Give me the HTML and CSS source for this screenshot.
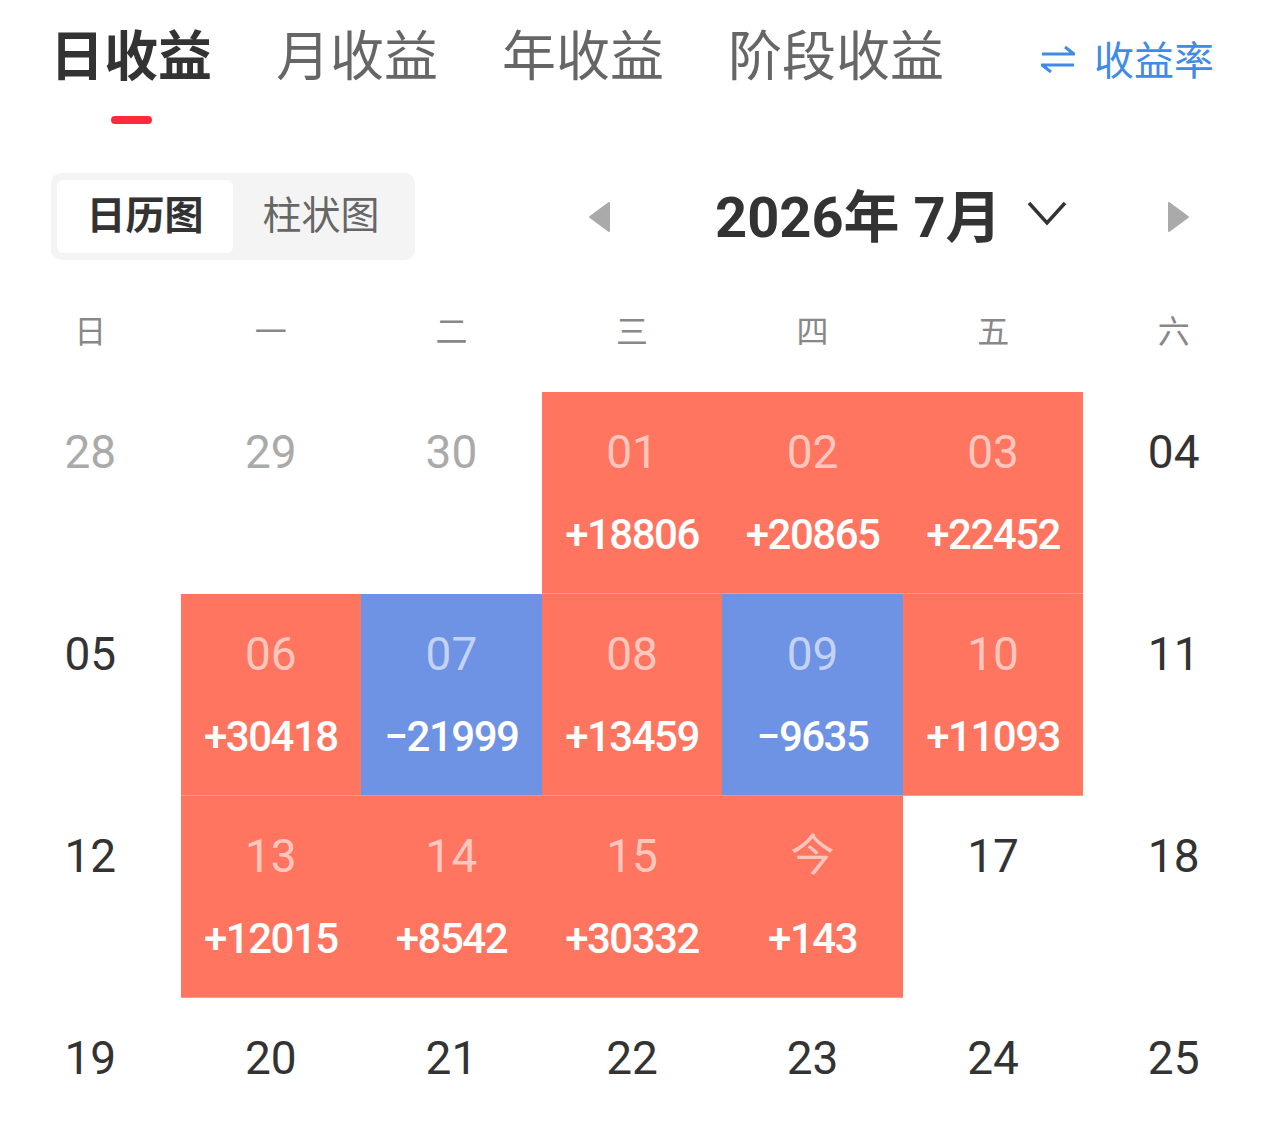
FILE: index.html
```html
<!DOCTYPE html>
<html lang="zh-CN">
<head>
    <meta charset="UTF-8">
    <meta name="viewport" content="width=device-width, initial-scale=1.0">
    <title>收益日历</title>
    <link rel="stylesheet" href="styles.css">
</head>
<body>
    <div class="tabs">
        <div class="tab active">日收益<span class="bar"></span></div>
        <div class="tab">月收益</div>
        <div class="tab">年收益</div>
        <div class="tab">阶段收益</div>
        <div class="rate">
            <svg width="34" height="30" viewBox="0 0 34 30">
                <path d="M1 11 H33 L24 4" fill="none" stroke="#3f8be8" stroke-width="3" stroke-linejoin="round"/>
                <path d="M33 22 H1 L10 29" fill="none" stroke="#3f8be8" stroke-width="3" stroke-linejoin="round"/>
            </svg>
            <span>收益率</span>
        </div>
    </div>

    <div class="toolbar">
        <div class="switch">
            <div class="seg on">日历图</div>
            <div class="seg">柱状图</div>
        </div>
        <div class="month">
            <svg class="arrow" width="22" height="32" viewBox="0 0 22 32">
                <path d="M21 2 L2 16 L21 30 Z" fill="#aaa" stroke="#aaa" stroke-width="2" stroke-linejoin="round"/>
            </svg>
            <div class="title">2026年 7月</div>
            <svg class="chev" width="42" height="28" viewBox="0 0 42 28">
                <path d="M3 4 L21 24 L39 4" fill="none" stroke="#333" stroke-width="3.5"/>
            </svg>
            <svg class="arrow next" width="22" height="32" viewBox="0 0 22 32">
                <path d="M1 2 L20 16 L1 30 Z" fill="#aaa" stroke="#aaa" stroke-width="2" stroke-linejoin="round"/>
            </svg>
        </div>
    </div>

    <div class="week">
        <span>日</span><span>一</span><span>二</span><span>三</span><span>四</span><span>五</span><span>六</span>
    </div>

    <div class="cal">
        <div class="cell"><span class="day other">28</span></div>
        <div class="cell"><span class="day other">29</span></div>
        <div class="cell"><span class="day other">30</span></div>
        <div class="cell up"><span class="day">01</span><span class="val">+18806</span></div>
        <div class="cell up"><span class="day">02</span><span class="val">+20865</span></div>
        <div class="cell up"><span class="day">03</span><span class="val">+22452</span></div>
        <div class="cell"><span class="day">04</span></div>

        <div class="cell"><span class="day">05</span></div>
        <div class="cell up"><span class="day">06</span><span class="val">+30418</span></div>
        <div class="cell down"><span class="day">07</span><span class="val">−21999</span></div>
        <div class="cell up"><span class="day">08</span><span class="val">+13459</span></div>
        <div class="cell down"><span class="day">09</span><span class="val">−9635</span></div>
        <div class="cell up"><span class="day">10</span><span class="val">+11093</span></div>
        <div class="cell"><span class="day">11</span></div>

        <div class="cell"><span class="day">12</span></div>
        <div class="cell up"><span class="day">13</span><span class="val">+12015</span></div>
        <div class="cell up"><span class="day">14</span><span class="val">+8542</span></div>
        <div class="cell up"><span class="day">15</span><span class="val">+30332</span></div>
        <div class="cell up"><span class="day today">今</span><span class="val">+143</span></div>
        <div class="cell"><span class="day">17</span></div>
        <div class="cell"><span class="day">18</span></div>

        <div class="cell"><span class="day">19</span></div>
        <div class="cell"><span class="day">20</span></div>
        <div class="cell"><span class="day">21</span></div>
        <div class="cell"><span class="day">22</span></div>
        <div class="cell"><span class="day">23</span></div>
        <div class="cell"><span class="day">24</span></div>
        <div class="cell"><span class="day">25</span></div>
    </div>
</body>
</html>
```

FILE: styles.css
```css
body {
    margin: 0;
    padding: 0;
    height: 1127px;
    background: #fff;
    color: #333;
    font-family: Roboto, "Noto Sans CJK SC", sans-serif;
    overflow: hidden;
}

/* top tabs */
.tabs {
    display: flex;
    align-items: flex-start;
    padding: 27px 0 0 50px;
    gap: 64px;
    height: 97px;
}
.tab {
    display: flex;
    flex-direction: column;
    align-items: center;
    font-size: 54px;
    line-height: 62px;
    color: #666;
}
.tab.active {
    color: #333;
    font-weight: bold;
}
.bar {
    display: block;
    width: 41px;
    height: 8px;
    margin-top: 27px;
    border-radius: 4px;
    background: #ff2b3c;
}
.rate {
    margin-left: auto;
    margin-right: 50px;
    display: flex;
    align-items: center;
    gap: 19px;
    height: 62px;
    font-size: 40px;
    color: #3f8be8;
}

/* switch + month picker */
.toolbar {
    display: flex;
    align-items: center;
    margin: 49px 0 0 51px;
}
.switch {
    display: flex;
    padding: 7px 6px;
    background: #f4f4f4;
    border-radius: 10px;
}
.seg {
    width: 176px;
    height: 73px;
    line-height: 73px;
    text-align: center;
    font-size: 39px;
    color: #666;
    border-radius: 6px;
}
.seg.on {
    background: #fff;
    color: #333;
    font-weight: bold;
}
.month {
    display: flex;
    align-items: center;
    margin-left: 173px;
}
.title {
    margin-left: 105px;
    margin-top: -8px;
    font-size: 56px;
    font-weight: bold;
    color: #333;
}
.chev {
    margin-left: 24px;
    margin-top: -8px;
}
.arrow.next {
    margin-left: 100px;
}

/* weekday row */
.week {
    display: grid;
    grid-template-columns: repeat(7, 1fr);
    margin-top: 52px;
    height: 40px;
    line-height: 40px;
    font-size: 32px;
    color: #888;
    text-align: center;
}

/* calendar */
.cal {
    display: grid;
    grid-template-columns: repeat(7, 1fr);
    grid-auto-rows: 202px;
    margin-top: 40px;
}
.cell {
    display: flex;
    flex-direction: column;
    align-items: center;
    padding-top: 33px;
    box-sizing: border-box;
}
.day {
    font-size: 46px;
    line-height: 54px;
    color: #333;
}
.day.other {
    color: #aaa;
}
.val {
    margin-top: 31px;
    font-size: 42px;
    line-height: 50px;
    font-weight: 500;
    letter-spacing: -1.5px;
    color: #fff;
}
.cell.up {
    background: #ff755f;
    box-shadow: inset 0 -1px 0 rgba(255, 255, 255, 0.25);
}
.cell.down {
    background: #6e92e4;
    box-shadow: inset 0 -1px 0 rgba(255, 255, 255, 0.25);
}
.cell.up .day,
.cell.down .day {
    color: rgba(255, 255, 255, 0.6);
}
.day.today {
    font-size: 44px;
}
```
